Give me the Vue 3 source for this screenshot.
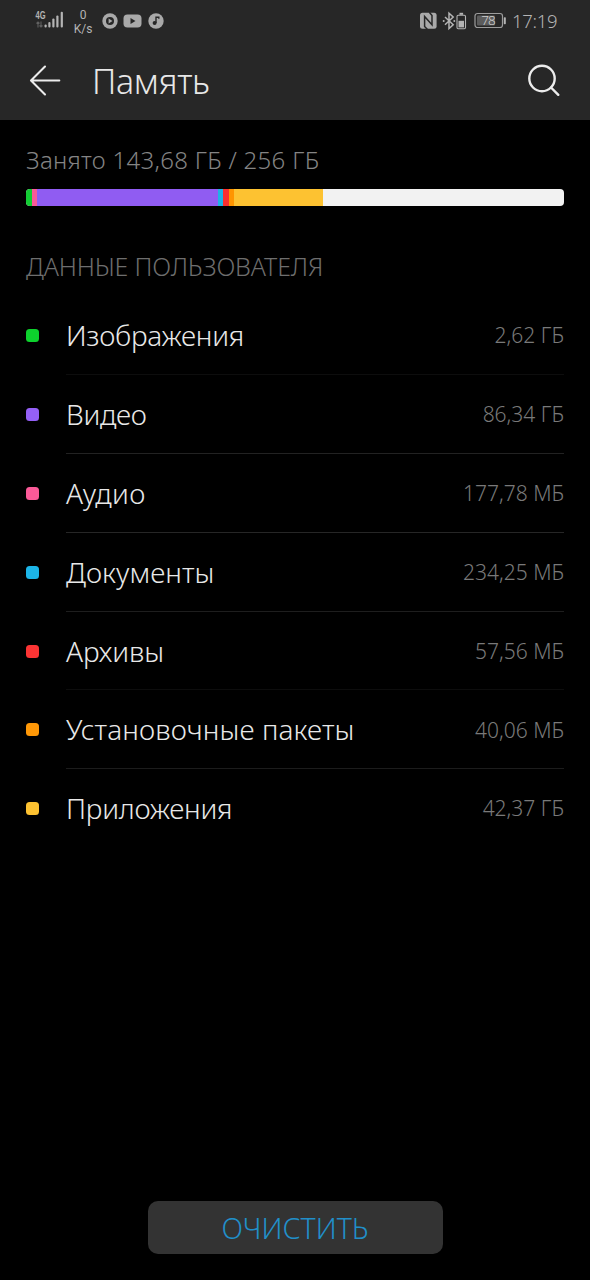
<script setup>
const segments = [
  { id: 'images', width: 6, color: '#12cc33' },
  { id: 'audio', width: 5, color: '#fb5a98' },
  { id: 'video', width: 181, color: '#905cf2' },
  { id: 'docs', width: 5.3, color: '#1fb2e4' },
  { id: 'archives', width: 5.7, color: '#fa2f2f' },
  { id: 'packages', width: 5.5, color: '#ff9500' },
  { id: 'apps', width: 89, color: '#fdc231' },
]
const rows = [
  { name: 'Изображения', size: '2,62 ГБ', color: '#0dd22d', line: '#0d0d0d', track: '-0.22px' },
  { name: 'Видео', size: '86,34 ГБ', color: '#9460f6', line: '#222', track: '-0.3px' },
  { name: 'Аудио', size: '177,78 МБ', color: '#fb5a98', line: '#262626', track: '0.4px' },
  { name: 'Документы', size: '234,25 МБ', color: '#1cb5e8', line: '#1e1e1e', track: '0.05px' },
  { name: 'Архивы', size: '57,56 МБ', color: '#fb3434', line: '#0d0d0d', track: '-0.1px' },
  { name: 'Установочные пакеты', size: '40,06 МБ', color: '#ff9807', line: '#1c1c1c', track: '0.13px' },
  { name: 'Приложения', size: '42,37 ГБ', color: '#fdc231', line: 'transparent', track: '-0.22px' },
]
</script>

<template>
  <main class="screen">
    <header class="top">
      <div class="status">
        <svg class="signal" width="30" height="22" viewBox="0 0 30 22">
          <text x="0.5" y="8.8" class="net" textLength="10" lengthAdjust="spacingAndGlyphs">4G</text>
          <g stroke="#626262" stroke-width="1.1" fill="none">
            <path d="M3 17.5V12M1.5 13.5L3 12l1.500 1.500M6 11.500V17M4.500 15.500L6 17l1.500-1.500" />
          </g>
          <g fill="#b4b4b4">
            <rect x="9.500" y="14.500" width="2.200" height="3" rx="1" />
            <rect x="13.300" y="12" width="2.200" height="5.500" rx="1" />
            <rect x="17.300" y="8.500" width="2.200" height="9" rx="1" />
            <rect x="21.300" y="5.500" width="2.200" height="12" rx="1" />
            <rect x="25.700" y="1.700" width="2.200" height="15.800" rx="1" />
          </g>
        </svg>
        <div class="speed"><span>0</span><span>K/s</span></div>
        <svg class="apps" width="62" height="16" viewBox="0 0 62 16">
          <g fill="#a9a9a9">
            <circle cx="8" cy="8" r="7.700" />
            <rect x="21.500" y="1.500" width="18" height="13" rx="4" />
            <circle cx="54" cy="8" r="7.700" />
          </g>
          <circle cx="8" cy="8" r="4" fill="#272727" />
          <path d="M6.600 5.600v4.800L10.500 8z" fill="#a9a9a9" />
          <path d="M28.500 5v6l5-3z" fill="#272727" />
          <circle cx="52.600" cy="10" r="2" fill="#272727" />
          <path d="M54 10V4.200h2.800v1.500" fill="none" stroke="#272727" stroke-width="1.400" />
        </svg>
        <span class="grow"></span>
        <svg class="radio" width="48" height="20" viewBox="0 0 48 20">
          <rect x="1" y="1.800" width="16.600" height="16" rx="2.500" fill="#a9a9a9" />
          <path d="M8.300 18.300 5.600 15.500V5.500L13 13.800V4.500L10.300 1.300" fill="none" stroke="#272727" stroke-width="1.500" />
          <g stroke="#b4b4b4" stroke-width="1.500" fill="none">
            <path d="M26 6 34.200 13.700 30 17.600V2.200L34.200 6 26 13.700" />
            <rect x="38" y="4.200" width="8.500" height="13.500" rx="1.200" stroke-width="1.100" />
          </g>
          <g fill="#b4b4b4">
            <circle cx="24.700" cy="10" r="1" />
            <circle cx="35.300" cy="10" r="1" />
            <rect x="40.500" y="1.800" width="3.600" height="2" />
            <rect x="39.500" y="9.800" width="5.500" height="6.600" />
          </g>
        </svg>
        <svg class="battery" width="34" height="18" viewBox="0 0 34 18">
          <rect x="1" y="1.500" width="27.500" height="14" rx="2.500" fill="none" stroke="#9c9c9c" stroke-width="1.200" />
          <rect x="3" y="3.500" width="18" height="10" rx="1" fill="#5c5c5c" />
          <rect x="29.800" y="5.200" width="2" height="7" rx=".7" fill="#b4b4b4" />
          <text x="7.300" y="13.300" class="level" textLength="14.500">78</text>
        </svg>
        <span class="clock">17:19</span>
      </div>
      <div class="bar">
        <svg class="back" width="34" height="34" viewBox="0 0 34 34">
          <path d="M31.300 16.500H3.300M17 2.500 3 16.500l14 14" />
        </svg>
        <h1>Память</h1>
        <svg class="search" width="36" height="36" viewBox="0 0 36 36">
          <circle cx="16" cy="15.500" r="12.700" />
          <path d="m25 24.500 7.300 7.300" />
        </svg>
      </div>
    </header>

    <section class="usage">
      <p>Занято 143,68 ГБ / 256 ГБ</p>
      <div class="meter">
        <i v-for="s in segments" :key="s.id" :style="{ width: s.width + 'px', background: s.color }"></i>
      </div>
    </section>

    <h2>ДАННЫЕ ПОЛЬЗОВАТЕЛЯ</h2>
    <ul>
      <li v-for="r in rows" :key="r.name">
        <i class="dot" :style="{ background: r.color }"></i>
        <div class="line" :style="{ borderColor: r.line }">
          <span class="name" :style="{ letterSpacing: r.track }">{{ r.name }}</span>
          <span class="size">{{ r.size }}</span>
        </div>
      </li>
    </ul>

    <footer><button>ОЧИСТИТЬ</button></footer>
  </main>
</template>

<style>
body { background: #000; }
</style>

<style scoped>
* { box-sizing: border-box; margin: 0; padding: 0; }
.screen {
  width: 590px; height: 1280px; background: #000; color: #e8e8e8;
  display: flex; flex-direction: column; overflow: hidden;
  font-family: "Noto Sans", "Open Sans", sans-serif; font-weight: 300;
}
.top { height: 120px; background: #272727; flex: none; }
.status { height: 41px; display: flex; align-items: center; padding: 0 33px 0 35px; color: #b4b4b4; }
.status svg { flex: none; }
.signal { margin-top: 1px; }
.net { font: 700 10.500px "Liberation Sans", sans-serif; fill: #b4b4b4; }
.speed {
  width: 22px; margin-left: 7px; margin-top: 2px; display: flex; flex-direction: column; align-items: center;
  font: 400 12px/14px Roboto, sans-serif;
}
.apps { margin-left: 8px; }
.grow { flex: 1; }
.radio { margin-right: 7px; }
.level { font: 300 13.500px "Noto Sans", sans-serif; fill: #d0d0d0; }
.clock { width: 45px; margin-left: 4px; font-size: 18.500px; letter-spacing: -0.300px; line-height: 40px; white-space: nowrap; }
.bar { height: 79px; display: flex; align-items: center; padding: 0 28px; }
.back, .search { fill: none; stroke: #ececec; stroke-width: 2.100; stroke-linecap: round; stroke-linejoin: round; }
.search { margin-left: auto; stroke-width: 2.400; }
h1 { font-size: 34px; font-weight: 300; line-height: 48px; margin-left: 30px; letter-spacing: -0.300px; }
.usage { padding: 23px 26px 0; height: 110px; }
.usage p { font-size: 24px; letter-spacing: 0.300px; line-height: 34px; color: #848484; white-space: nowrap; }
.meter { height: 17px; margin-top: 12px; background: #f2f2f2; border-radius: 4px; display: flex; overflow: hidden; }
.meter i { flex: none; }
h2 { font-size: 25px; letter-spacing: -0.150px; font-weight: 300; line-height: 34px; color: #6e6e6e; margin: 19px 26px 13.300px; white-space: nowrap; }
ul { list-style: none; padding: 0 26px; }
li { height: 78.830px; display: flex; align-items: center; }
.dot { width: 13px; height: 13px; border-radius: 3.500px; margin-right: 27px; flex: none; }
.line { flex: 1; height: 100%; display: flex; align-items: center; justify-content: space-between; border-bottom: 1px solid; white-space: nowrap; }
.name { font-size: 28px; }
.size { font-size: 21px; color: #797979; padding-top: 0.500px; }
footer { margin-top: auto; padding-bottom: 26px; display: flex; justify-content: center; }
button {
  width: 295px; height: 53px; border: 0; border-radius: 10px; background: #333;
  color: #218fc9; font: inherit; font-size: 28.500px; line-height: 53px; padding-top: 1px;
}
</style>
